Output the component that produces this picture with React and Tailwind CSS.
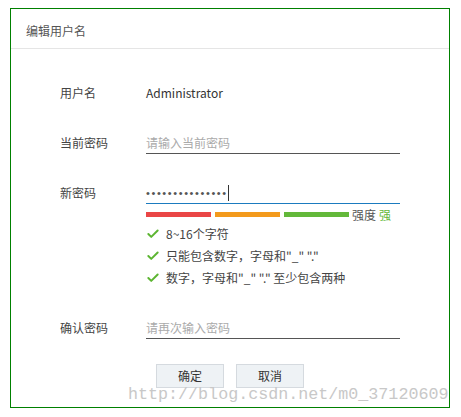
import { Check } from 'lucide-react';

const FONT = { fontFamily: '"Noto Sans CJK SC", "Noto Sans", sans-serif' };

function Field({ label, children, className = '' }) {
  return (
    <div className={`flex items-start ${className}`}>
      <span className="w-[135px] shrink-0 whitespace-nowrap pl-[49px] text-[12px] leading-[20px] text-[#444]">{label}</span>
      {children}
    </div>
  );
}

function Rule({ text }) {
  return (
    <div className="flex h-[22px] items-center">
      <Check className="h-[14px] w-[14px] text-[#5cb531]" strokeWidth={3.4} />
      <span className="ml-[6px] text-[12px] text-[#444]">{text}</span>
    </div>
  );
}

export default function App() {
  return (
    <div className="relative h-[417px] w-[461px] bg-white pl-[10px] pt-[8px]" style={FONT}>
      <div className="h-[400px] w-[440px] border border-[#008000]">
        <div className="h-[40px] border-b border-[#e5e5e5] pl-[15px] pt-[13px] text-[12px] leading-[18px] text-[#555]">
          编辑用户名
        </div>

        <Field label="用户名" className="mt-[34px]">
          <span className="text-[12px] leading-[20px] text-[#333]">Administrator</span>
        </Field>

        <Field label="当前密码" className="mt-[30px]">
          <div className="h-[21px] w-[254px] border-b border-[#555] text-[12px] leading-[20px] text-[#aaa]">
            请输入当前密码
          </div>
        </Field>

        <Field label="新密码" className="mt-[29px]">
          <div className="w-[254px]">
            <div className="flex h-[21px] items-center border-b border-[#1b7bbf]">
              <span className="text-[11px] leading-[20px] tracking-[1.6px] text-[#555]" style={{ fontFamily: '"Liberation Sans", sans-serif' }}>
                •••••••••••••••
              </span>
              <span className="h-[16px] w-[1px] bg-[#333]" />
            </div>
            <div className="mt-[4px] flex h-[13px] items-center">
              <span className="h-[5px] w-[65px] bg-[#ea4646]" />
              <span className="ml-[4px] h-[5px] w-[65px] bg-[#f39a1c]" />
              <span className="ml-[4px] h-[5px] w-[65px] bg-[#63b83a]" />
              <span className="ml-[3px] text-[12px] leading-[13px] text-[#555]">强度</span>
              <span className="ml-[3px] text-[12px] leading-[13px] text-[#63b83a]">强</span>
            </div>
            <div className="mt-[2px]">
              <Rule text="8~16个字符" />
              <Rule text={'只能包含数字，字母和"_" "."'} />
              <Rule text={'数字，字母和"_" "." 至少包含两种'} />
            </div>
          </div>
        </Field>

        <Field label="确认密码" className="mt-[29px]">
          <div className="h-[21px] w-[254px] border-b border-[#555] text-[12px] leading-[20px] text-[#aaa]">
            请再次输入密码
          </div>
        </Field>

        <div className="ml-[145px] mt-[25px] flex gap-[12px]">
          <button className="h-[24px] w-[68px] border border-[#d5dadf] bg-[#eef2f5] text-[12px] text-[#333]">确定</button>
          <button className="h-[24px] w-[68px] border border-[#d5dadf] bg-[#eef2f5] text-[12px] text-[#333]">取消</button>
        </div>
      </div>

      <span
        className="pointer-events-none absolute left-[128px] top-[385px] whitespace-nowrap text-[16.7px] leading-[20px] text-[#c8c8c8]"
        style={{ fontFamily: '"Liberation Mono", monospace' }}
      >
        http://blog.csdn.net/m0_37120609
      </span>
    </div>
  );
}
